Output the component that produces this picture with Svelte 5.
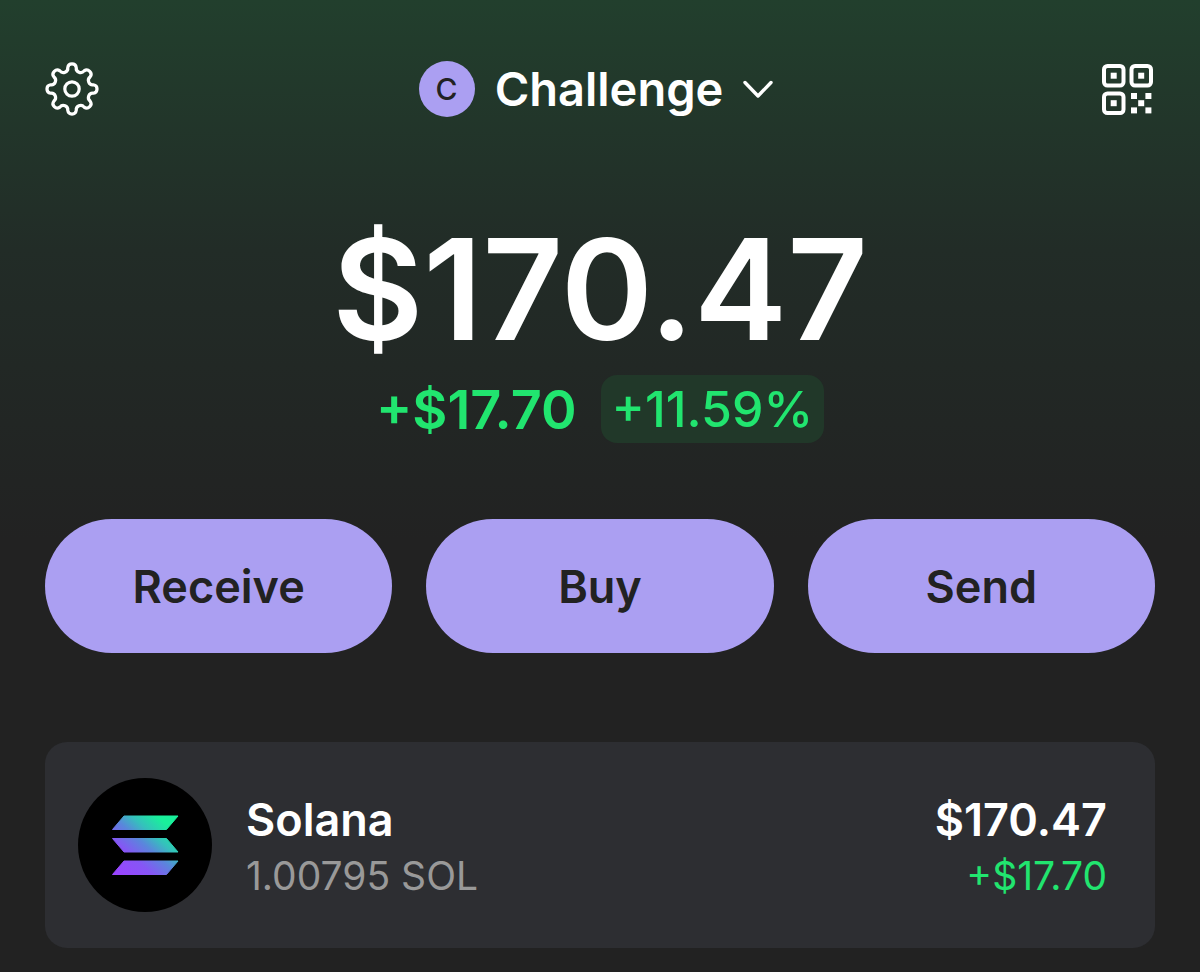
<script>
	const account = { name: 'Challenge', balance: '$170.47', change: '+$17.70', percent: '+11.59%' };

	const actions = ['Receive', 'Buy', 'Send'];

	const tokens = [
		{ name: 'Solana', amount: '1.00795 SOL', value: '$170.47', change: '+$17.70' }
	];

	const gearPath = buildGear(8, 21.8, 4.3, 4.4);

	// Rounded cog: one arc out for every tooth, one arc in for every valley
	function buildGear(teeth, radius, tipRadius, valleyRadius) {
		const step = (Math.PI * 2) / teeth;
		const point = (angle) =>
			`${(radius * Math.sin(angle)).toFixed(2)} ${(-radius * Math.cos(angle)).toFixed(2)}`;

		let d = `M${point(-step / 4)}`;
		for (let i = 0; i < teeth; i++) {
			const angle = i * step;
			d += `A${tipRadius} ${tipRadius} 0 0 1 ${point(angle + step / 4)}`;
			d += `A${valleyRadius} ${valleyRadius} 0 0 0 ${point(angle + (step * 3) / 4)}`;
		}
		return d + 'Z';
	}
</script>

<main class="wallet">
	<header class="header">
		<button class="icon-button" aria-label="Settings">
			<svg width="54" height="54" viewBox="-27 -27 54 54" fill="none" stroke="#fff" stroke-width="3.2">
				<path d={gearPath} stroke-linejoin="round" />
				<circle r="7.2" />
			</svg>
		</button>

		<button class="account">
			<span class="avatar">{account.name[0]}</span>
			<span class="account-name">{account.name}</span>
			<svg width="30" height="18" viewBox="0 0 30 18" fill="none">
				<path d="M2 2.500L15 16L28 2.500" stroke="#fff" stroke-width="3.4" stroke-linecap="round" stroke-linejoin="round" />
			</svg>
		</button>

		<button class="icon-button" aria-label="Scan QR code">
			<svg width="54" height="54" viewBox="-1 -2 54 54">
				<g fill="none" stroke="#fff" stroke-width="4">
					<rect x="2" y="2" width="19.5" height="19.5" rx="3.5" />
					<rect x="29.5" y="2" width="19.5" height="19.5" rx="3.5" />
					<rect x="2" y="29.5" width="19.5" height="19.5" rx="3.5" />
				</g>
				<g fill="#fff">
					<rect x="8.7" y="8.7" width="6" height="6" />
					<rect x="36.2" y="8.7" width="6" height="6" />
					<rect x="8.7" y="36.2" width="6" height="6" />
					<rect x="29" y="29" width="6" height="6" />
					<rect x="43.4" y="29" width="6" height="6" />
					<rect x="36.2" y="36.2" width="6" height="6" />
					<rect x="29" y="43.4" width="6" height="6" />
					<rect x="43.4" y="43.4" width="6" height="6" />
				</g>
			</svg>
		</button>
	</header>

	<section class="summary">
		<h1 class="balance">{account.balance}</h1>
		<div class="changes">
			<span class="change">{account.change}</span>
			<span class="percent">{account.percent}</span>
		</div>
	</section>

	<div class="actions">
		{#each actions as action}
			<button class="action">{action}</button>
		{/each}
	</div>

	<ul class="tokens">
		{#each tokens as token}
			<li class="token">
				<svg class="logo" width="134" height="134" viewBox="0 0 134 134" aria-hidden="true">
					<defs>
						<linearGradient id="solana" gradientUnits="userSpaceOnUse" x1="39" y1="99" x2="95" y2="35">
							<stop offset="0.05" stop-color="#9945ff" />
							<stop offset="0.3" stop-color="#8656f5" />
							<stop offset="0.5" stop-color="#5a86dc" />
							<stop offset="0.65" stop-color="#36bfbd" />
							<stop offset="0.85" stop-color="#19f09b" />
						</linearGradient>
					</defs>
					<circle cx="67" cy="67" r="67" fill="#000" />
					<g fill="url(#solana)" stroke="url(#solana)" stroke-width="1" stroke-linejoin="round">
						<path d="M46 38H100L88.500 51.500H34.500Z" />
						<path d="M34.500 60.500H88.500L100 74H46Z" />
						<path d="M46 83H100L88.500 96.500H34.500Z" />
					</g>
				</svg>
				<div class="details">
					<span class="primary">{token.name}</span>
					<span class="secondary">{token.amount}</span>
				</div>
				<div class="details worth">
					<span class="primary">{token.value}</span>
					<span class="secondary gain">{token.change}</span>
				</div>
			</li>
		{/each}
	</ul>
</main>

<style>
	:global(body) {
		margin: 0;
		background: #222222;
	}

	.wallet {
		box-sizing: border-box;
		min-height: 100vh;
		padding: 61px 45px 24px;
		background: linear-gradient(#223f2d 0, #222c27 250px, #222222 540px);
		color: #fff;
		font-family: Inter, 'Liberation Sans', sans-serif;
	}

	button {
		padding: 0;
		border: none;
		background: none;
		color: inherit;
		font: inherit;
		cursor: pointer;
	}

	svg {
		display: block;
	}

	.header {
		display: flex;
		align-items: center;
		justify-content: space-between;
		height: 56px;
	}

	.account {
		display: flex;
		align-items: center;
		gap: 20px;
		padding-right: 8px;
	}

	.avatar {
		display: flex;
		align-items: center;
		justify-content: center;
		width: 56px;
		height: 56px;
		border-radius: 50%;
		background: #ab9ff2;
		color: #222222;
		font-size: 30px;
		font-weight: 500;
	}

	.account-name {
		font-size: 47px;
		font-weight: 600;
		line-height: 56px;
	}

	.summary {
		margin-top: 86px;
		text-align: center;
	}

	.balance {
		margin: 0;
		font-size: 140px;
		font-weight: 600;
		line-height: 172px;
	}

	.changes {
		display: flex;
		align-items: center;
		justify-content: center;
		gap: 24px;
		color: #21e56f;
	}

	.change {
		font-size: 54px;
		font-weight: 600;
	}

	.percent {
		padding: 0 11px;
		border-radius: 16px;
		background: #213829;
		font-size: 50px;
		font-weight: 500;
		line-height: 68px;
	}

	.actions {
		display: grid;
		grid-template-columns: repeat(3, 1fr);
		gap: 34px;
		margin-top: 76px;
	}

	.action {
		height: 134px;
		border-radius: 67px;
		background: #ab9ff2;
		color: #222222;
		font-size: 45px;
		font-weight: 600;
	}

	.tokens {
		margin: 89px 0 0;
		padding: 0;
		list-style: none;
	}

	.token {
		display: flex;
		align-items: center;
		padding: 36px 48px 36px 33px;
		border-radius: 22px;
		background: #2d2e32;
	}

	.details {
		display: flex;
		flex-direction: column;
		margin-left: 34px;
		padding-top: 6px;
	}

	.worth {
		margin-left: auto;
		text-align: right;
	}

	.primary {
		font-size: 45px;
		font-weight: 600;
		line-height: 56px;
	}

	.secondary {
		color: #999999;
		font-size: 39px;
		line-height: 56px;
	}

	.gain {
		color: #21e56f;
	}
</style>
